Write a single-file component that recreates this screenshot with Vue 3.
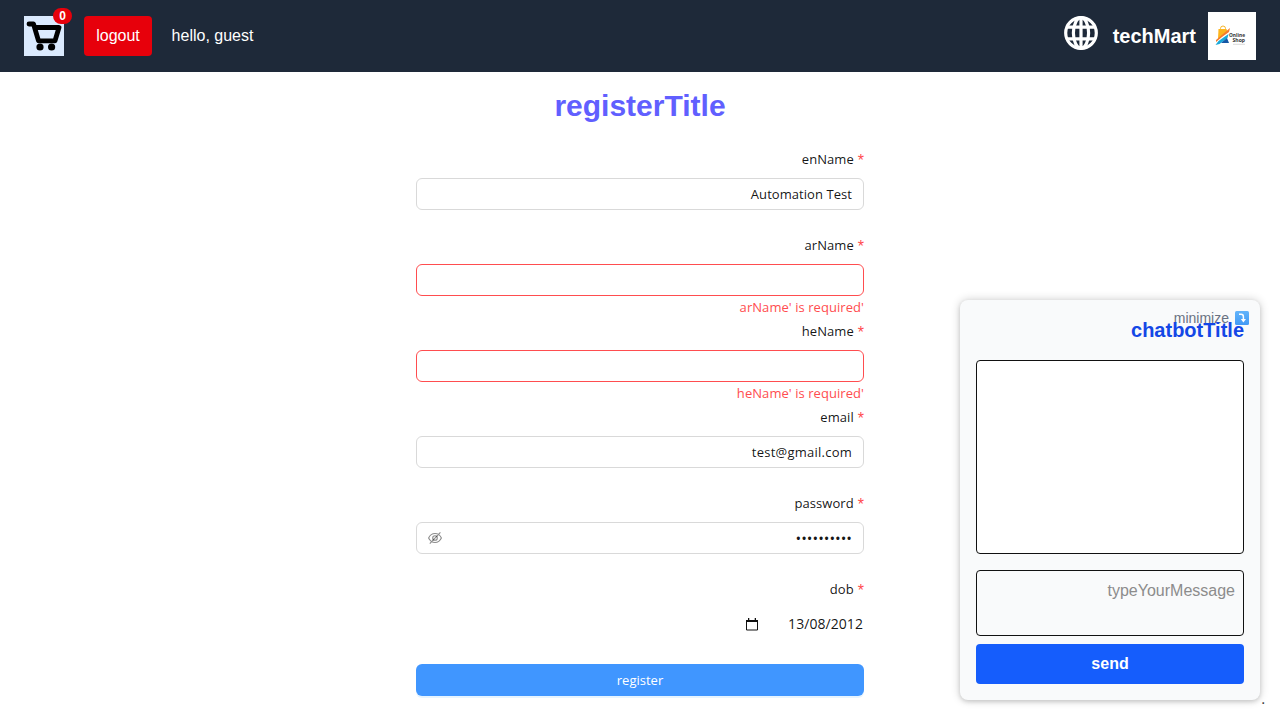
<script setup>
const fields = [
  { name: 'enName', value: 'Automation Test' },
  { name: 'arName', value: '', error: "arName' is required'" },
  { name: 'heName', value: '', error: "heName' is required'" },
  { name: 'email', value: 'test@gmail.com', wide: true },
  { name: 'password', value: '••••••••••', secret: true },
]
</script>

<template>
  <div class="page">
    <header class="bar">
      <div class="left">
        <div class="cart">
          <svg width="40" height="40" viewBox="0 0 40 40">
            <path d="M5 8H9.500L14.500 24.800H31L35 11.500H11" fill="none" stroke="#000" stroke-width="4.800" stroke-linecap="round" stroke-linejoin="round" />
            <circle cx="16" cy="31" r="3.600" /><circle cx="27.600" cy="31" r="3.600" />
          </svg>
          <span class="badge">0</span>
        </div>
        <button class="logout">logout</button>
        <span class="hello">hello, guest</span>
      </div>
      <div class="right">
        <svg class="globe" width="34" height="34" viewBox="0 0 34 34">
          <circle cx="17" cy="17" r="15.300" />
          <ellipse cx="17" cy="17" rx="7.600" ry="15.300" />
          <path d="M17 2v30M3.500 11.200h27M3.500 22.800h27" />
        </svg>
        <span class="brand">techMart</span>
        <svg class="logo" width="48" height="48" viewBox="0 0 48 48">
          <rect width="48" height="48" fill="#fff" />
          <path d="M12.500 18v-1.500a2.500 2.500 0 0 1 5 0V18" fill="none" stroke="#f5b52c" stroke-width="1" />
          <path d="M10.500 17h8l1 3-9.500 7z" fill="#fdb51c" />
          <path d="M8 28l7-6 7-6-1 4-7 5-6 5z" fill="#f47a2c" />
          <path d="M7.500 33l3-4 10-7-1 4-8 6z" fill="#18a8d8" />
          <path d="M13 31l6-5 2 5z" fill="#1557a5" />
          <text x="21" y="25.200" textLength="16" lengthAdjust="spacingAndGlyphs" font-size="6">Online</text>
          <text x="24.500" y="30.300" textLength="12.500" lengthAdjust="spacingAndGlyphs" font-size="6">Shop</text>
          <path d="M25 32.300h12" stroke="#ccc" stroke-width=".7" />
        </svg>
      </div>
    </header>

    <main class="form">
      <h1>registerTitle</h1>
      <div v-for="f in fields" :key="f.name" class="item">
        <div class="label"><span>{{ f.name }}</span><i>*</i></div>
        <div class="input" :class="{ bad: f.error }">
          <svg v-if="f.secret" class="eye" width="14" height="14" viewBox="0 0 14 14">
            <path d="M.6 7C2 4 4.200 2.500 7 2.500S12 4 13.400 7C12 10 9.800 11.500 7 11.500S2 10 .6 7zM1.800 12.600 12.400 1.400" />
            <circle cx="7" cy="7" r="2.300" />
          </svg>
          <span class="value" :class="{ dots: f.secret, wide: f.wide }">{{ f.value }}</span>
        </div>
        <div class="help"><span>{{ f.error }}</span></div>
      </div>
      <div class="item">
        <div class="label"><span>dob</span><i>*</i></div>
        <div class="date">
          <svg width="12" height="13" viewBox="0 0 12 13">
            <path d="M.5 2.500h11v9.500H.5z" fill="none" stroke="#111" />
            <path d="M0 2h12v2H0zM2 0h1.300v2H2zM8.700 0H10v2H8.700z" fill="#111" />
          </svg>
          <span>13/08/2012</span>
        </div>
        <div class="help"></div>
      </div>
      <button class="register">register</button>
    </main>

    <aside class="chat">
      <div class="mini">
        <span>minimize</span>
        <svg width="14" height="14" viewBox="0 0 14 14">
          <defs><linearGradient id="sky" x2="0" y2="1"><stop stop-color="#63b4fa" /><stop offset="1" stop-color="#419af5" /></linearGradient></defs>
          <rect width="14" height="14" rx="1.500" fill="url(#sky)" />
          <path d="M4 3.300h2.200q2.200 0 2.200 2.400v3" fill="none" stroke="#fff" stroke-width="1.500" />
          <path d="M5.800 7.900h5.200L8.400 11.500z" fill="#fff" />
        </svg>
      </div>
      <h2>chatbotTitle</h2>
      <div class="log"></div>
      <div class="message">typeYourMessage</div>
      <button class="send">send</button>
    </aside>
    <span class="stop">.</span>
  </div>
</template>

<style>
body { background: #fff; overflow: hidden; }
</style>

<style scoped>
* { box-sizing: border-box; }
.page { position: relative; height: 720px; overflow: hidden; font: 16px/24px "Liberation Sans", Arial, sans-serif; color: #000; }
button { border: 0; font-family: inherit; padding: 0; display: block; color: #fff; }
.bar { height: 72px; padding: 0 24px; background: #1e2939; display: flex; justify-content: space-between; align-items: center; color: #fff; }
.left, .right { display: flex; align-items: center; }
.cart { position: relative; width: 40px; height: 40px; background: #dbeafe; }
.cart svg { display: block; }
.badge { position: absolute; top: -8px; right: -8px; height: 16px; width: 19px; border-radius: 8px; background: #e7000b; font: bold 12px/16px "Liberation Sans", Arial, sans-serif; text-align: center; }
.logout { width: 68px; height: 40px; margin-left: 20px; border-radius: 4px; background: #e7000b; font-size: 16px; line-height: 24px; }
.hello { margin-left: 19.600px; }
.globe { margin: -6px 15px 0 0; fill: none; stroke: #fff; stroke-width: 3.200; }
.brand { font-size: 20px; font-weight: 700; line-height: 28px; margin-right: 12px; }
.logo text { font-weight: 700; font-family: "Open Sans", sans-serif; fill: #333; }
.form { width: 448px; margin: 0 auto; padding-top: 16px; font: 13px/22px "Open Sans", "Noto Sans", sans-serif; letter-spacing: .06px; color: rgba(0,0,0,.92); }
h1 { margin: 0 0 24px; font: bold 30px/36px "Liberation Sans", Arial, sans-serif; letter-spacing: 0; color: #615fff; text-align: center; }
.label { height: 22px; margin-bottom: 8px; display: flex; justify-content: flex-end; }
.label i { margin-left: 4px; font: 16px/22px "Liberation Sans", Arial, sans-serif; letter-spacing: 0; padding-top: 2px; color: #ff4d4f; }
.input { height: 32px; border: 1px solid #d9d9d9; border-radius: 6px; padding: 0 11px; display: flex; align-items: center; }
.input.bad { border-color: #ff4d4f; }
.value { margin-left: auto; }
.wide { letter-spacing: .24px; }
.dots { font-size: 15px; letter-spacing: 0; }
.eye { fill: none; stroke: rgba(0,0,0,.45); stroke-width: 1.100; }
.help { height: 24px; color: #ff4d4f; text-align: right; }
.date { height: 32px; display: flex; align-items: center; justify-content: flex-end; gap: 30px; padding-right: 1px; font-size: 14px; }
.register { width: 100%; height: 32px; border-radius: 6px; background: #4096ff; box-shadow: 0 2px 0 rgba(5,145,255,.1); font-size: 13px; line-height: 22px; }
.chat { position: absolute; left: 960px; top: 300px; width: 300px; height: 400px; padding: 16px; border-radius: 8px; background: #f9fafb; box-shadow: 0 0 10px rgba(0,0,0,.2), 0 2px 4px rgba(0,0,0,.12); }
.mini { position: absolute; right: 11px; top: 8px; display: flex; align-items: center; gap: 6px; font-size: 14px; line-height: 20px; color: #6a7282; }
h2 { position: relative; margin: 0 0 16px; font-size: 20px; line-height: 28px; text-align: right; color: #1447e6; }
.log { height: 194px; background: #fff; border: 1px solid #111; border-radius: 4px; }
.message { height: 66px; margin: 16px 0 8px; border: 1px solid #111; border-radius: 4px; padding: 8px; text-align: right; color: #8c8c8c; }
.send { width: 100%; height: 40px; border-radius: 4px; background: #155dfc; font-size: 16px; font-weight: 700; }
.stop { position: absolute; left: 1261px; top: 687px; color: #444; }
</style>
